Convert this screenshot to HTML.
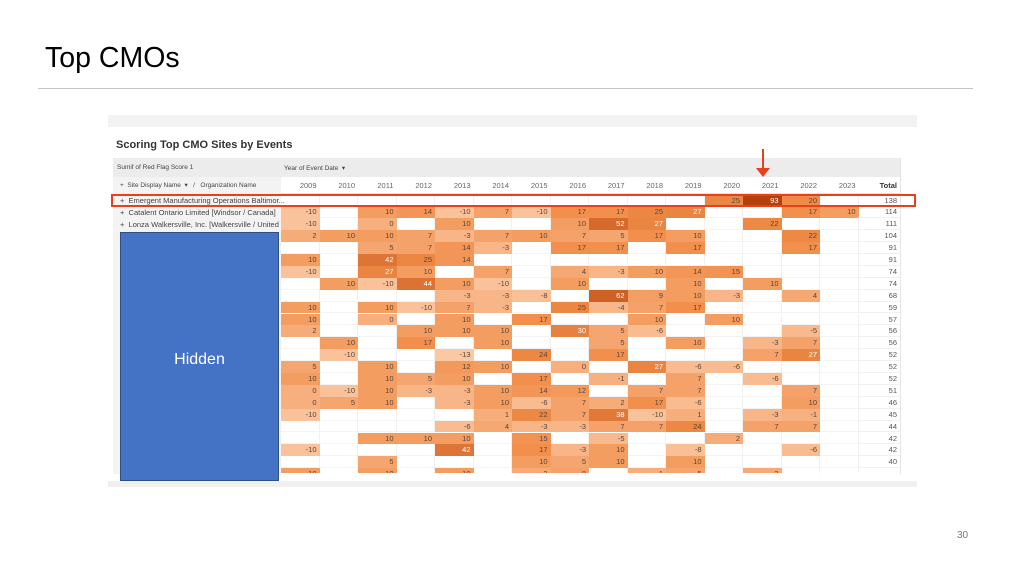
<!DOCTYPE html>
<html><head><meta charset="utf-8">
<style>
body{margin:0;width:1010px;height:571px;background:#fff;position:relative;overflow:hidden;font-family:"Liberation Sans",sans-serif;}
.abs{position:absolute;}
.cell{position:absolute;height:11.9px;font-size:7.5px;line-height:11.9px;text-align:right;box-sizing:border-box;padding-right:3px;color:#5a4a40;}
.lbl{position:absolute;font-size:7.5px;color:#444;white-space:nowrap;}
</style></head><body>
<div class="abs" style="left:45px;top:42px;font-size:28.5px;color:#000;">Top CMOs</div>
<div class="abs" style="left:38px;top:88px;width:935px;height:1px;background:#c4c4c4;"></div>
<div class="abs" style="left:957px;top:530px;font-size:10px;color:#777;">30</div>

<div class="abs" style="left:108px;top:115px;width:809px;height:12px;background:#f2f2f2;"></div>
<div class="abs" style="left:108px;top:481px;width:809px;height:6px;background:#f0f0f0;"></div>
<div class="abs" style="left:116px;top:139px;font-size:11px;font-weight:bold;color:#333;">Scoring Top CMO Sites by Events</div>

<div class="abs" style="left:113px;top:158px;width:787px;height:19px;background:#ececec;"></div>
<div class="abs" style="left:113px;top:177px;width:168px;height:54px;background:#f3f3f3;"></div>
<div class="lbl" style="left:117px;top:164px;font-size:6.5px;">Sumif of Red Flag Score 1</div>
<div class="lbl" style="left:284px;top:164px;font-size:6.5px;">Year of Event Date &nbsp;▾</div>
<div class="lbl" style="left:120px;top:181px;font-size:6.5px;">+ &nbsp;Site Display Name &nbsp;▾ &nbsp; / &nbsp; Organization Name</div>
<div class="lbl" style="left:120px;top:196px;">+ &nbsp;Emergent Manufacturing Operations Baltimor...</div>
<div class="lbl" style="left:120px;top:208px;">+ &nbsp;Catalent Ontario Limited [Windsor / Canada]</div>
<div class="lbl" style="left:120px;top:220px;">+ &nbsp;Lonza Walkersville, Inc. [Walkersville / United ...</div>
<div class="abs" style="left:113px;top:231px;width:168px;height:243px;background:#f3f3f3;"></div>
<div class="abs" style="left:120px;top:232px;width:157px;height:247px;background:#4472c4;border:1px solid #2f4f80;"></div>
<div class="abs" style="left:120px;top:351px;width:159px;text-align:center;font-size:16px;color:#fff;">Hidden</div>

<div id="grid"></div>

<div class="abs" style="left:111px;top:194px;width:801px;height:9px;border:2px solid #e8401c;"></div>
<div class="abs" style="left:762px;top:149px;width:2px;height:20px;background:#e8401c;"></div>
<div class="abs" style="left:756px;top:168px;width:0;height:0;border-left:7px solid transparent;border-right:7px solid transparent;border-top:9px solid #e8401c;"></div>

<script>
var R=[
["","","","","","","","","","","",25,93,20,"",138],
[-10,"",10,14,-10,7,-10,17,17,25,27,"","",17,10,114],
[-10,"",0,"",10,"","",10,52,27,"","",22,"","",111],
[2,10,10,7,-3,7,10,7,5,17,10,"","",22,"",104],
["","",5,7,14,-3,"",17,17,"",17,"","",17,"",91],
[10,"",42,25,14,"","","","","","","","","","",91],
[-10,"",27,10,"",7,"",4,-3,10,14,15,"","","",74],
["",10,-10,44,10,-10,"",10,"","",10,"",10,"","",74],
["","","","",-3,-3,-8,"",62,9,10,-3,"",4,"",68],
[10,"",10,-10,7,-3,"",25,-4,7,17,"","","","",59],
[10,"",0,"",10,"",17,"","",10,"",10,"","","",57],
[2,"","",10,10,10,"",30,5,-6,"","","",-5,"",56],
["",10,"",17,"",10,"","",5,"",10,"",-3,7,"",56],
["",-10,"","",-13,"",24,"",17,"","","",7,27,"",52],
[5,"",10,"",12,10,"",0,"",27,-6,-6,"","","",52],
[10,"",10,5,10,"",17,"",-1,"",7,"",-6,"","",52],
[0,-10,10,-3,-3,10,14,12,"",7,7,"","",7,"",51],
[0,5,10,"",-3,10,-6,7,2,17,-6,"","",10,"",46],
[-10,"","","","",1,22,7,38,-10,1,"",-3,-1,"",45],
["","","","",-6,4,-3,-3,7,7,24,"",7,7,"",44],
["","",10,10,10,"",15,"",-5,"","",2,"","","",42],
[-10,"","","",42,"",17,-3,10,"",-8,"","",-6,"",42],
["","",5,"","","",10,5,10,"",10,"","","","",40],
[10,"",10,"",10,"",3,8,"",1,5,"",3,"","",40]
];
function lerp(a,b,t){return a.map(function(x,i){return Math.round(x+(b[i]-x)*t);});}
function col(v){
 var t=(v+13)/106; if(t<0)t=0; if(t>1)t=1;
 var c0=[251,200,164],c1=[241,140,72],c2=[180,64,10];
 var c=t<0.3?lerp(c0,c1,t/0.3):lerp(c1,c2,(t-0.3)/0.7);
 return "rgb("+c.join(",")+")";
}
var h='';
var years=[];for(var y=2009;y<=2023;y++)years.push(y);
years.forEach(function(y,i){h+='<div class="cell" style="left:'+(281+i*38.5)+'px;top:180px;width:38.5px;color:#666;">'+y+'</div>';});
h+='<div class="cell" style="left:858px;top:180px;width:42px;color:#333;font-weight:bold;">Total</div>';
h+='<div class="abs" style="left:281px;top:193px;width:619px;height:1px;background:#e4e4e4;"></div>';
var top0=194.5;
R.forEach(function(r,ri){
 var t=top0+ri*11.9;
 if(ri==23){h+='<div class="abs" style="left:281px;top:'+t+'px;width:619px;height:5px;overflow:hidden;">';}
 for(var i=0;i<15;i++){
  var v=r[i];
  var tt=(ri==23)?0:t;
  var left=(ri==23)?(i*38.5):(281+i*38.5);
  if(v===""){h+='<div class="cell" style="left:'+left+'px;top:'+tt+'px;width:38.5px;border-right:1px solid #f0f0f0;border-bottom:1px solid #f3f3f3;"></div>';}
  else{h+='<div class="cell" style="left:'+left+'px;top:'+tt+'px;width:38.5px;background:'+col(v)+';color:'+(v>=27?'#fff':'#5a4535')+';">'+v+'</div>';}
 }
 if(ri==23){h+='</div>';}
 else h+='<div class="cell" style="left:858px;top:'+t+'px;width:42px;color:#555;border-bottom:1px solid #f0f0f0;">'+r[15]+'</div>';
});
h+='<div class="abs" style="left:900px;top:158px;width:1px;height:316px;background:#e4e4e4;"></div>';
document.getElementById('grid').innerHTML=h;
</script>
</body></html>
